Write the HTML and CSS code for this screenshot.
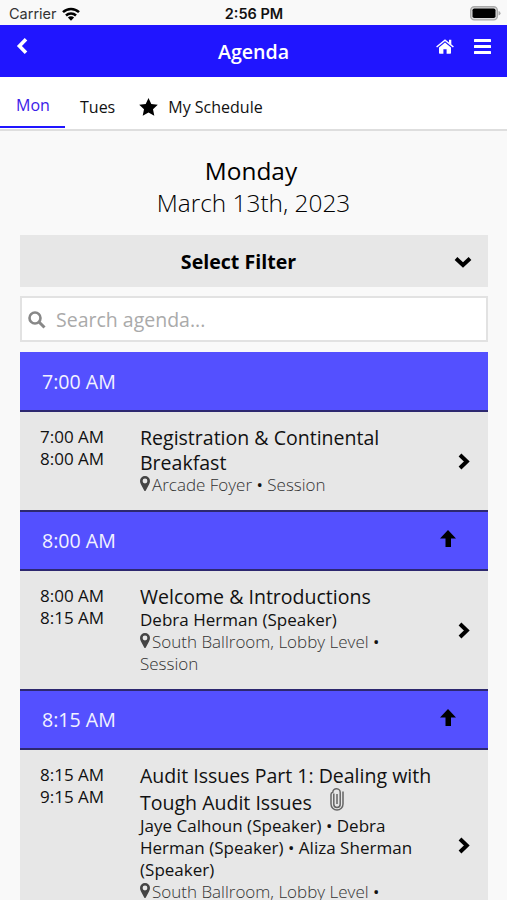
FILE: index.html
```html
<!DOCTYPE html>
<html lang="en">
<head>
<meta charset="utf-8">
<meta name="viewport" content="width=device-width, initial-scale=1">
<title>Agenda</title>
<link rel="stylesheet" href="styles.css">
</head>
<body>
<svg class="defs" aria-hidden="true">
  <symbol id="pin" viewBox="0 0 10 15"><path fill-rule="evenodd" d="M5 0a5 5 0 0 1 5 5c0 1.300-.4 2.200-1 3.400L5.800 14.400q-.8 1.200-1.600 0L1 8.400C.4 7.200 0 6.300 0 5a5 5 0 0 1 5-5zm0 2.600a2.400 2.400 0 1 0 0 4.800 2.400 2.400 0 0 0 0-4.800z"/></symbol>
  <symbol id="chevron" viewBox="0 0 12 17"><path d="M2 2l6.800 6.500L2 15" fill="none" stroke="currentColor" stroke-width="4"/></symbol>
  <symbol id="up" viewBox="0 0 16 17"><path d="M8 0l8 8.500h-5V17H5.500V8.500H0z"/></symbol>
</svg>

<div class="status">
  <div class="carrier">Carrier
    <svg class="wifi" viewBox="0 0 18 14"><g fill="none" stroke="#000" stroke-width="2.500"><path d="M1 5.200a11.500 11.500 0 0 1 16 0"/><path d="M4 8.500a7.200 7.200 0 0 1 10 0"/></g><path d="M9 13.700L5.900 10.500a4.400 4.400 0 0 1 6.200 0z"/></svg>
  </div>
  <div class="clock">2:56 PM</div>
  <svg class="battery" viewBox="0 0 31 15"><rect x=".7" y=".7" width="26.600" height="13.200" rx="3.600" fill="#ddd" stroke="#aaa" stroke-width="1.400"/><rect x="2.500" y="2.500" width="23" height="9.600" rx="1.800"/><path d="M28.500 5q2 .5 2 2.300t-2 2.300z" fill="#aaa"/></svg>
</div>

<header class="bar">
  <svg class="back" viewBox="0 0 12 18"><path d="M10 2.200L3.400 9l6.600 6.800" fill="none" stroke="#fff" stroke-width="3.600"/></svg>
  <h1>Agenda</h1>
  <div class="tools">
    <svg class="home" viewBox="0 0 18 15"><path d="M9 3.400l6 5V14q0 .8-.8.8h-3.600v-4.500H7.400v4.500H3.800Q3 14.800 3 14V8.400z"/><path d="M.6 8L9 1.100 17.400 8" fill="none" stroke="#fff" stroke-width="1.500"/><path d="M13 .8h2.300v5L13 4z"/></svg>
    <svg class="menu" viewBox="0 0 17 15"><rect y="0" width="17" height="3" rx=".6"/><rect y="6" width="17" height="3" rx=".6"/><rect y="12" width="17" height="3" rx=".6"/></svg>
  </div>
</header>

<nav class="tabs">
  <a class="tab active">Mon</a>
  <a class="tab">Tues</a>
  <a class="tab schedule"><svg class="star" viewBox="0 0 19 18"><path d="M9.500 0l2.800 6 6.500.8-4.800 4.500 1.300 6.500-5.800-3.200-5.800 3.200L5 11.300.2 6.800 6.700 6z"/></svg>My Schedule</a>
</nav>

<main>
  <div class="day">Monday</div>
  <div class="date">March 13th, 2023</div>

  <div class="filter"><span>Select Filter</span><svg viewBox="0 0 18 12"><path d="M2 2.500l7 6.500 7-6.500" fill="none" stroke="#000" stroke-width="4"/></svg></div>

  <div class="search"><svg viewBox="0 0 18 18"><g fill="none" stroke="#888"><circle cx="7" cy="7" r="5.500" stroke-width="2.600"/><path d="M11 11l5.500 5.500" stroke-width="3"/></g></svg><span>Search agenda...</span></div>

  <section class="slot">
    <div class="band"><span>7:00 AM</span></div>
    <article class="row first">
      <div class="times">7:00 AM<br>8:00 AM</div>
      <div class="info">
        <div class="title">Registration &amp; Continental<br>Breakfast</div>
        <div class="place"><svg class="pin"><use href="#pin"/></svg>Arcade Foyer <b>•</b> Session</div>
      </div>
      <svg class="go"><use href="#chevron"/></svg>
    </article>
  </section>

  <section class="slot">
    <div class="band"><span>8:00 AM</span><svg class="up"><use href="#up"/></svg></div>
    <article class="row second">
      <div class="times">8:00 AM<br>8:15 AM</div>
      <div class="info">
        <div class="title">Welcome &amp; Introductions</div>
        <div class="people">Debra Herman (Speaker)</div>
        <div class="place"><svg class="pin"><use href="#pin"/></svg>South Ballroom, Lobby Level <b>•</b><br>Session</div>
      </div>
      <svg class="go"><use href="#chevron"/></svg>
    </article>
  </section>

  <section class="slot">
    <div class="band"><span>8:15 AM</span><svg class="up"><use href="#up"/></svg></div>
    <article class="row third">
      <div class="times">8:15 AM<br>9:15 AM</div>
      <div class="info">
        <div class="title">Audit Issues Part 1: Dealing with</div>
        <div class="title clipped">Tough Audit Issues<svg class="clip" viewBox="0 0 14 23"><path d="M3.800 5.500v10.800a3.200 3.200 0 0 0 6.400 0V4.700a3.700 3.700 0 0 0-7.400-.5Q1 4.500 1 6.500v9.500a6 6 0 0 0 12 0V3.500M7 6v10" fill="none" stroke="#666" stroke-width="1.500"/></svg></div>
        <div class="people">Jaye Calhoun (Speaker) • Debra<br>Herman (Speaker) • Aliza Sherman<br>(Speaker)</div>
        <div class="place"><svg class="pin"><use href="#pin"/></svg>South Ballroom, Lobby Level <b>•</b></div>
      </div>
      <svg class="go"><use href="#chevron"/></svg>
    </article>
  </section>
</main>
</body>
</html>
```

FILE: styles.css
```css
* { box-sizing: border-box; }
html, body { height: 900px; overflow: hidden; }
body { margin: 0; background: #f9f9f9; color: #111; font-family: "Open Sans", sans-serif; }
svg { display: block; flex: none; }
.defs { width: 0; height: 0; position: absolute; }

.status { display: grid; grid-template-columns: 1fr auto 1fr; align-items: center; height: 25px; padding: 2px 6px 0 9px; font-family: Inter, sans-serif; font-size: 14.500px; }
.carrier { display: flex; align-items: center; gap: 5px; color: #333; }
.wifi { width: 18px; height: 14px; }
.clock { margin-right: 2px; font-weight: 600; color: #111; }
.battery { width: 31px; height: 15px; justify-self: end; }

.bar { display: grid; grid-template-columns: 1fr auto 1fr; height: 52px; padding: 0 16px; background: #2015ff; color: #fff; }
.bar h1 { margin: 0; font-size: 19.600px; font-weight: 600; line-height: 54px; }
.back { width: 12px; height: 18px; margin-top: 12px; }
.tools { display: flex; justify-content: flex-end; gap: 20px; fill: #fff; }
.home { width: 18px; height: 15px; margin-top: 14px; }
.menu { width: 17px; height: 15px; margin-top: 14px; }

.tabs { display: flex; height: 54px; background: #fff; border-bottom: 2px solid #dedede; font-size: 16px; line-height: 61px; }
.tab { white-space: nowrap; }
.tab.active { width: 65px; height: 51px; padding-left: 1px; text-align: center; line-height: 57px; color: #3a20e8; border-bottom: 2px solid #2015ff; }
.tab + .tab { margin-left: 15px; }
.tabs .schedule { display: flex; margin-left: 24px; }
.star { width: 19px; height: 18px; margin: 21px 10px 0 0; }

main { padding: 24px 19px 0 20px; }
.day, .date { text-align: center; font-size: 24.400px; line-height: 32px; color: #000; }
.day { padding-right: 6px; }
.date { padding-right: 1px; font-weight: 300; }
.filter { display: flex; align-items: center; height: 52px; margin-top: 16px; padding: 0 16px 0 3px; background: #e7e7e7; color: #000; font-size: 19.600px; font-weight: 700; }
.filter span { flex: 1; text-align: center; padding-top: 1px; }
.filter svg { width: 18px; height: 12px; margin-top: 2px; }
.search { display: flex; align-items: center; height: 46px; margin-top: 9px; padding: 1px 0 0 6px; background: #fff; border: 2px solid #e2e2e2; color: #aaa; font-size: 19.500px; }
.search svg { width: 18px; height: 18px; margin-right: 10px; }

.slot:first-of-type { margin-top: 10px; }
.band { display: flex; align-items: center; justify-content: space-between; height: 61px; padding: 0 32px 0 22px; background: #5450ff; border: solid #2d2870; border-width: 2px 0; color: #f2f2ff; font-size: 19.600px; }
.slot:first-of-type .band { height: 60px; border-top: 0; }
.up { width: 16px; height: 17px; margin-bottom: 5px; fill: #000; }
.row { display: flex; background: #e7e7e7; padding: 14px 18px 0 20px; }
.first { height: 98px; }
.second { height: 118px; }
.third { height: 190px; }
.times { width: 100px; font-size: 17px; line-height: 22px; }
.info { flex: 1; white-space: nowrap; font-size: 17px; line-height: 22px; }
.title { margin-bottom: -.600px; font-size: 19.550px; line-height: 24.500px; }
.clipped { display: flex; height: 28px; line-height: 29px; }
.clip { width: 14px; height: 23px; margin: 0 0 0 18px; }
.people { letter-spacing: .02px; }
.place { font-weight: 300; color: #333; }
.place b { font-weight: 400; color: #111; }
.pin { display: inline-block; width: 10px; height: 15px; margin-right: 2px; fill: #444; }
.go { width: 12px; height: 17px; margin-top: -14px; align-self: center; color: #000; }
```
